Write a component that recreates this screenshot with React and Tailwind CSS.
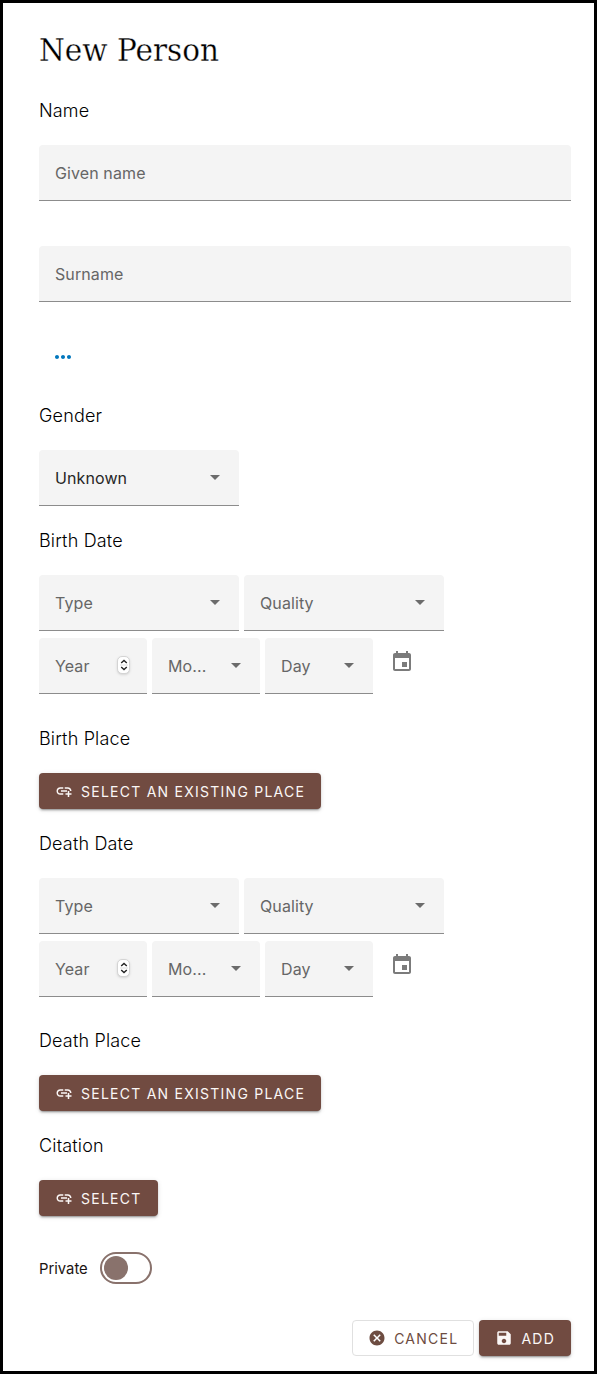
import React from 'react';

const ICONS = {
  link: 'M8 11h8v2H8zm12.1 1H22c0-2.76-2.24-5-5-5h-4v1.9h4c1.71 0 3.1 1.39 3.1 3.1zM3.9 12c0-1.71 1.39-3.1 3.1-3.1h4V7H7c-2.76 0-5 2.24-5 5s2.24 5 5 5h4v-1.9H7c-1.71 0-3.1-1.39-3.1-3.1zM19 12h-2v3h-3v2h3v3h2v-3h3v-2h-3v-3z',
  save: 'M17 3H5c-1.11 0-2 .9-2 2v14c0 1.1.89 2 2 2h14c1.1 0 2-.9 2-2V7l-4-4zm-5 16c-1.66 0-3-1.34-3-3s1.34-3 3-3 3 1.34 3 3-1.34 3-3 3zm3-10H5V5h10v4z',
  cancel: 'M12 2C6.47 2 2 6.47 2 12s4.47 10 10 10 10-4.47 10-10S17.53 2 12 2zm5 13.59L15.59 17 12 13.41 8.41 17 7 15.59 10.59 12 7 8.41 8.41 7 12 10.59 15.59 7 17 8.41 13.41 12 17 15.59z',
  event: 'M17 12h-5v5h5v-5zM16 1v2H8V1H6v2H5c-1.11 0-1.99.9-1.99 2L3 19c0 1.1.89 2 2 2h14c1.1 0 2-.9 2-2V5c0-1.1-.9-2-2-2h-1V1h-2zm3 18H5V8h14v11z',
  more: 'M6 10c-1.1 0-2 .9-2 2s.9 2 2 2 2-.9 2-2-.9-2-2-2zm12 0c-1.1 0-2 .9-2 2s.9 2 2 2 2-.9 2-2-.9-2-2-2zm-6 0c-1.1 0-2 .9-2 2s.9 2 2 2 2-.9 2-2-.9-2-2-2z',
};

function Icon({ name, className }) {
  return (
    <svg viewBox="0 0 24 24" fill="currentColor" className={className}>
      <path d={ICONS[name]} />
    </svg>
  );
}

function Heading({ children }) {
  return (
    <h3 className="flex h-[69px] items-center text-[18px] font-[350] tracking-[0.16px] text-black">
      {children}
    </h3>
  );
}

const FIELD =
  'flex h-14 items-center rounded-t border-b border-[#8c8c8c] bg-[#f4f4f4] pl-4 pt-px text-[16px] font-[380] tracking-[0.1px]';

function TextField({ label }) {
  return <div className={`${FIELD} text-[#666]`}>{label}</div>;
}

function Select({ label, width = 'w-[108px]', color = 'text-[#666]' }) {
  return (
    <div className={`${FIELD} ${width} ${color} justify-between pr-[19px]`}>
      <span>{label}</span>
      <svg viewBox="0 0 10 5" className="mb-0.5 h-[5px] w-2.5" fill="#6b6b6b">
        <path d="M0 0h10L5 5z" />
      </svg>
    </div>
  );
}

function YearField() {
  return (
    <div className={`${FIELD} w-[108px] justify-between pr-[17px] text-[#666]`}>
      <span>Year</span>
      <span className="mb-[3px] flex h-[18px] w-[13px] items-center justify-center rounded-[5px] border border-[#d4d4d4] bg-white shadow-sm">
        <svg viewBox="0 0 8 14" className="h-3.5 w-2 shrink-0" fill="none" stroke="#222" strokeWidth="1.4">
          <path d="M1.2 5L4 2.5 6.8 5M1.2 9L4 11.5 6.8 9" />
          <path d="M-1 7h10" stroke="#ddd" strokeWidth="1" />
        </svg>
      </span>
    </div>
  );
}

function DateFields() {
  return (
    <div className="flex flex-col gap-[7px]">
      <div className="flex gap-[5px]">
        <Select label="Type" width="w-[200px]" />
        <Select label="Quality" width="w-[200px]" />
      </div>
      <div className="flex gap-[5px]">
        <YearField />
        <Select label="Mo..." />
        <Select label="Day" />
        <Icon name="event" className="ml-3 mt-3 size-6 text-[#7b7b7b]" />
      </div>
    </div>
  );
}

function Button({ icon, children, outlined = false }) {
  const look = outlined
    ? 'border border-[#e0e0e0] bg-white px-[15px] text-[#6d4c41]'
    : 'bg-[#714b41] px-4 text-[#fbf7f6] shadow-[0_3px_1px_-2px_rgba(0,0,0,0.2),0_2px_2px_0_rgba(0,0,0,0.14),0_1px_5px_0_rgba(0,0,0,0.12)]';
  return (
    <button className={`flex h-9 w-fit items-center gap-2 whitespace-nowrap rounded text-[14px] tracking-[1.25px] ${look}`}>
      <Icon name={icon} className="size-[18px]" />
      {children}
    </button>
  );
}

export default function App() {
  return (
    <main className="h-[1374px] w-[597px] border-[3px] border-black bg-white pl-9 pr-[23px] font-['Inter',sans-serif]">
      <h1 className="flex h-[73px] items-end whitespace-nowrap font-['Roboto_Slab','DejaVu_Serif',serif] text-[32px] leading-[52px] text-black">
        <span className="origin-left scale-x-[0.922] [-webkit-text-stroke:0.3px_white]">New Person</span>
      </h1>
      <Heading>Name</Heading>
      <TextField label="Given name" />
      <div className="h-[45px]" />
      <TextField label="Surname" />
      <div className="flex h-[79px] items-end pl-3">
        <Icon name="more" className="mb-3 size-6 text-[#0277bd]" />
      </div>
      <Heading>Gender</Heading>
      <Select label="Unknown" width="w-[200px]" color="text-[#262626]" />
      <Heading>Birth Date</Heading>
      <DateFields />
      <div className="h-2.5" />
      <Heading>Birth Place</Heading>
      <Button icon="link">SELECT AN EXISTING PLACE</Button>
      <Heading>Death Date</Heading>
      <DateFields />
      <div className="h-[9px]" />
      <Heading>Death Place</Heading>
      <Button icon="link">SELECT AN EXISTING PLACE</Button>
      <Heading>Citation</Heading>
      <Button icon="link">SELECT</Button>
      <div className="mt-9 flex h-8 items-center text-[14.8px] text-[#1c1412]">
        <span className="w-[61px] pt-0.5">Private</span>
        <span className="flex h-8 w-[52px] items-center rounded-full border-2 border-[#89726c] pl-0.5">
          <span className="size-6 rounded-full bg-[#89726c]" />
        </span>
      </div>
      <div className="mt-9 flex justify-end gap-[5px]">
        <Button icon="cancel" outlined>CANCEL</Button>
        <Button icon="save">ADD</Button>
      </div>
    </main>
  );
}
